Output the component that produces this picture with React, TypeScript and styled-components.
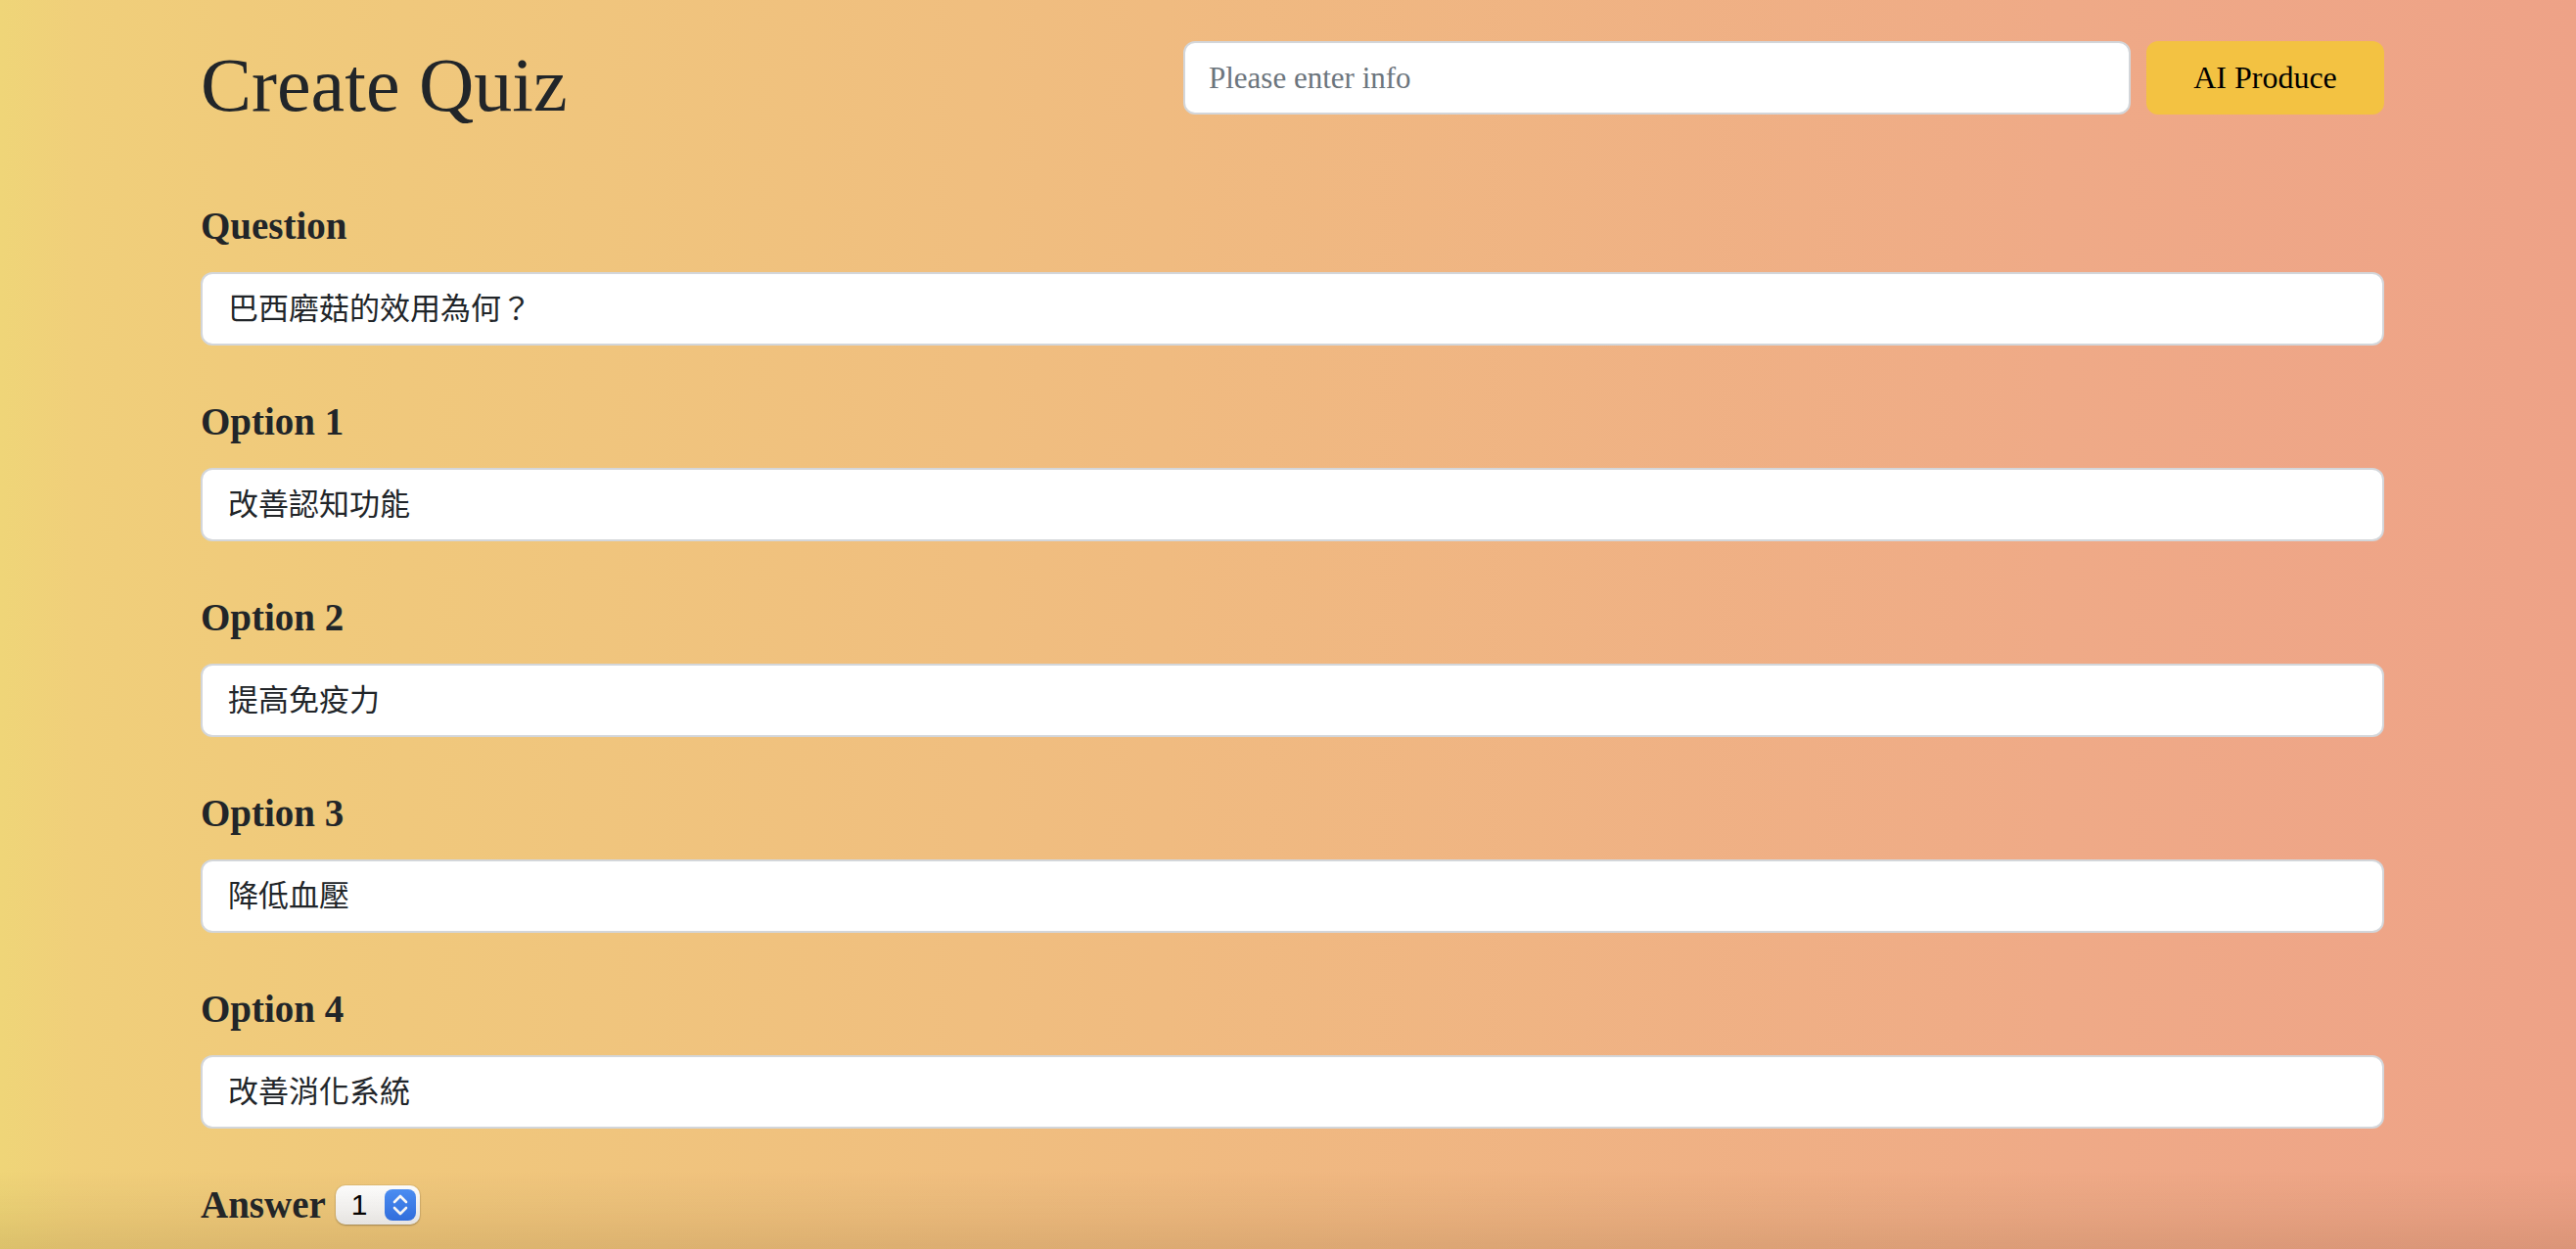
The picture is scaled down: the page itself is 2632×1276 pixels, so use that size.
import React from "react";
import styled, { createGlobalStyle } from "styled-components";

const GlobalStyle = createGlobalStyle`
  html, body { margin: 0; padding: 0; }
  body {
    font-family: "Liberation Serif", "Noto Sans CJK TC", serif;
    color: #212529;
    background: #eec17f;
  }
  * { box-sizing: border-box; }
`;

const Page = styled.div`
  min-height: 100vh;
  background: linear-gradient(
    to right,
    #efd578 0%,
    #f0cf7a 3%,
    #f0cb7b 9%,
    #f0bb80 45%,
    #efaa87 80%,
    #eea287 100%
  );
  overflow: hidden;
`;

const Container = styled.main`
  width: 2231px;
  margin-left: 205px;
  padding-top: 40px;
  padding-bottom: 40px;
`;

const Header = styled.header`
  display: flex;
  justify-content: space-between;
  align-items: flex-start;
  margin-bottom: 73px;
`;

const Title = styled.h1`
  margin: 0;
  font-family: "Liberation Serif", serif;
  font-weight: 400;
  font-size: 78px;
  line-height: 1.2;
  color: #212529;
`;

const Generator = styled.div`
  display: flex;
  gap: 16px;
  margin-top: 2px;
`;

const TextInput = styled.input<{ $width?: number }>`
  display: block;
  width: ${(p) => (p.$width ? `${p.$width}px` : "100%")};
  height: 75px;
  padding: 12px 24px;
  border: 2px solid #d3d6da;
  border-radius: 12px;
  background: #fff;
  color: #212529;
  font-family: "Liberation Serif", "Noto Sans CJK TC", serif;
  font-size: 31px;
  line-height: 47px;
  outline: none;
  &::placeholder {
    color: #6c757d;
  }
`;

const CjkInput = styled(TextInput)`
  font-family: "Noto Sans CJK TC", "Noto Sans CJK SC", sans-serif;
  font-size: 31px;
  padding: 9px 24px 15px 26px;
`;

const ProduceButton = styled.button`
  width: 243px;
  height: 75px;
  border: none;
  border-radius: 12px;
  background: #f3c242;
  color: #000;
  font-family: "Liberation Serif", serif;
  font-size: 32px;
  cursor: pointer;
`;

const Field = styled.div`
  margin-bottom: 54px;
`;

const Label = styled.label`
  display: block;
  margin-bottom: 23px;
  font-family: "Liberation Serif", serif;
  font-weight: 700;
  font-size: 39px;
  line-height: 48px;
  color: #212529;
`;

const AnswerRow = styled.div`
  display: flex;
  align-items: center;
  gap: 10px;
`;

const AnswerLabel = styled(Label)`
  margin-bottom: 0;
`;

const SelectBox = styled.div`
  display: inline-flex;
  align-items: center;
  justify-content: space-between;
  width: 86px;
  height: 40px;
  padding: 0 4px 0 0;
  border-radius: 10px;
  background: linear-gradient(to bottom, #ffffff 0%, #f3f3f3 100%);
  box-shadow: 0 1px 2px rgba(0, 0, 0, 0.28), 0 0 0 1px rgba(0, 0, 0, 0.05);
`;

const NativeSelect = styled.select`
  appearance: none;
  -webkit-appearance: none;
  border: none;
  background: transparent;
  font-family: "Liberation Sans", "DejaVu Sans", sans-serif;
  font-size: 30px;
  color: #000;
  width: 46px;
  padding: 0 0 0 16px;
  outline: none;
`;

const Stepper = styled.span`
  display: flex;
  align-items: center;
  justify-content: center;
  width: 32px;
  height: 32px;
  border-radius: 8px;
  background: linear-gradient(to bottom, #4b8ff7 0%, #2f72eb 100%);
`;

const BottomShade = styled.div`
  position: fixed;
  left: 0;
  right: 0;
  bottom: 0;
  height: 80px;
  pointer-events: none;
  background: linear-gradient(
    to bottom,
    rgba(90, 60, 20, 0) 0%,
    rgba(90, 60, 20, 0.05) 50%,
    rgba(90, 60, 20, 0.13) 100%
  );
`;

const fields = [
  { label: "Question", value: "巴西磨菇的效用為何？" },
  { label: "Option 1", value: "改善認知功能" },
  { label: "Option 2", value: "提高免疫力" },
  { label: "Option 3", value: "降低血壓" },
  { label: "Option 4", value: "改善消化系統" },
];

export default function App() {
  return (
    <>
      <GlobalStyle />
      <Page>
        <Container>
          <Header>
            <Title>Create Quiz</Title>
            <Generator>
              <TextInput $width={968} placeholder="Please enter info" />
              <ProduceButton>AI Produce</ProduceButton>
            </Generator>
          </Header>
          {fields.map((f) => (
            <Field key={f.label}>
              <Label>{f.label}</Label>
              <CjkInput defaultValue={f.value} />
            </Field>
          ))}
          <AnswerRow>
            <AnswerLabel>Answer</AnswerLabel>
            <SelectBox>
              <NativeSelect defaultValue="1">
                <option value="1">1</option>
                <option value="2">2</option>
                <option value="3">3</option>
                <option value="4">4</option>
              </NativeSelect>
              <Stepper>
                <svg width="20" height="26" viewBox="0 0 20 26" fill="none">
                  <path d="M4 10 L10 4 L16 10" stroke="#fff" strokeWidth="2.6" strokeLinecap="round" strokeLinejoin="round" />
                  <path d="M4 16 L10 22 L16 16" stroke="#fff" strokeWidth="2.6" strokeLinecap="round" strokeLinejoin="round" />
                </svg>
              </Stepper>
            </SelectBox>
          </AnswerRow>
        </Container>
        <BottomShade />
      </Page>
    </>
  );
}
